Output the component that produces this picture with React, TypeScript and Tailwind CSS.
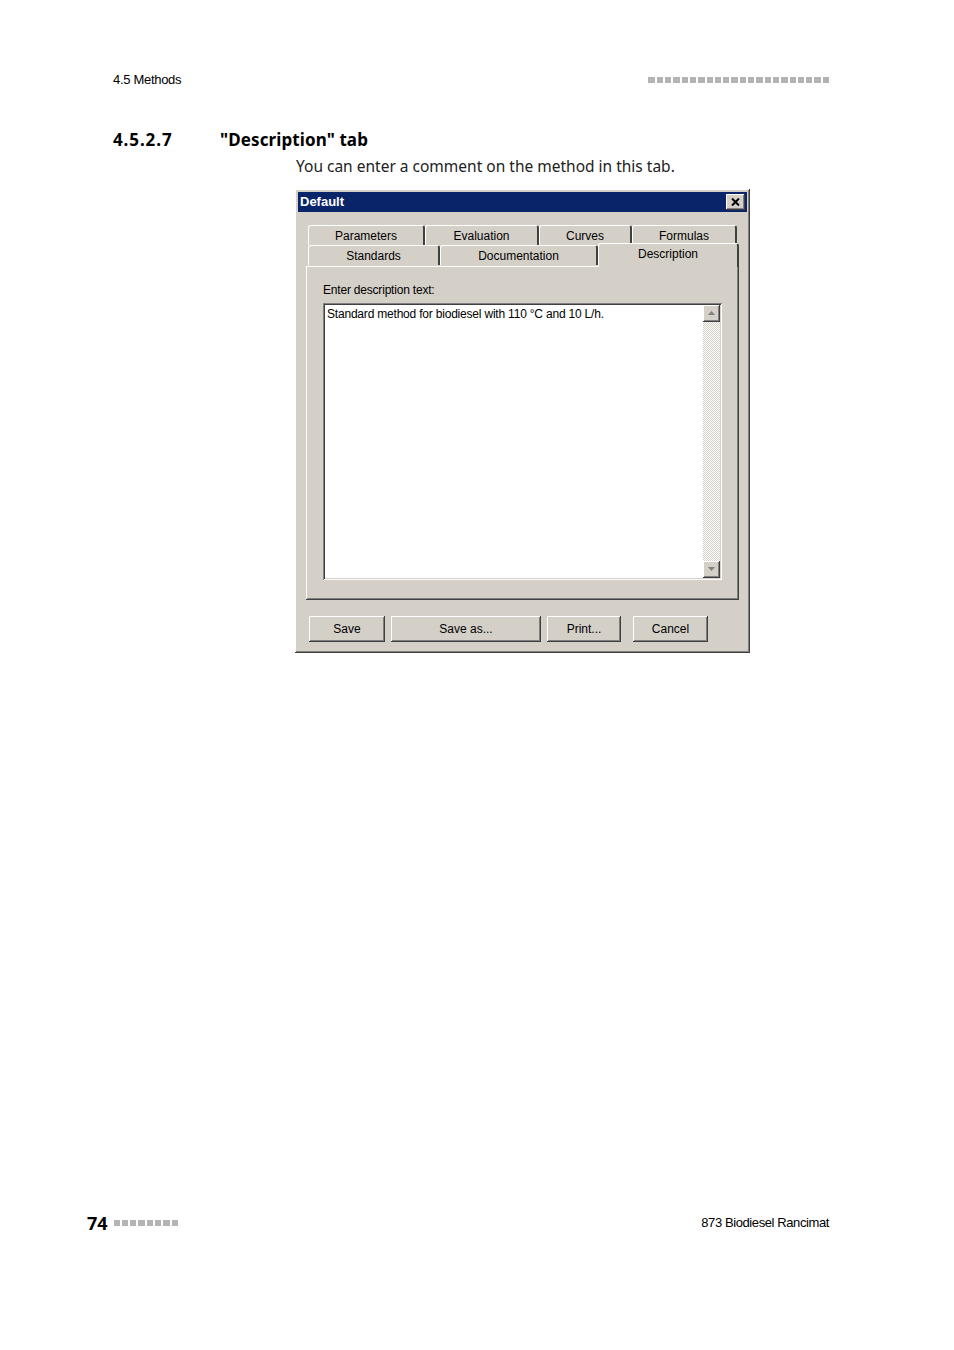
import React from "react";

const raised =
  "shadow-[inset_-1px_-1px_#404040,inset_1px_1px_#ffffff,inset_-2px_-2px_#808080,inset_2px_2px_#d4d0c8]";
const sunken =
  "shadow-[inset_1px_1px_#808080,inset_-1px_-1px_#ffffff,inset_2px_2px_#404040,inset_-2px_-2px_#d4d0c8]";

function Dots({ count }: { count: number }) {
  return (
    <div className="flex gap-[2px]">
      {Array.from({ length: count }).map((_, i) => (
        <span key={i} className="block w-[6.3px] h-[6px] bg-[#b3b3b3]" />
      ))}
    </div>
  );
}

function Tab({ label, width, selected = false }: { label: string; width: number; selected?: boolean }) {
  return (
    <div
      style={{ width }}
      className={`flex items-center justify-center rounded-t-[3px] border-t border-l border-white border-r-2 border-r-[#404040] ${
        selected ? "h-[24px] -mt-[2px] pb-[3px] relative z-10" : "h-[20px] pt-[1px]"
      } bg-[#d4d0c8]`}
    >
      {label}
    </div>
  );
}

function WinButton({ label, width }: { label: string; width: number }) {
  return (
    <button
      type="button"
      style={{ width }}
      className={`h-[26px] bg-[#d4d0c8] ${raised} text-[12px] text-black`}
    >
      {label}
    </button>
  );
}

function ArrowBtn({ up }: { up: boolean }) {
  return (
    <div className={`w-[17px] h-[17px] bg-[#d4d0c8] ${raised} flex items-center justify-center`}>
      <svg width="7" height="4" viewBox="0 0 7 4">
        {up ? <path d="M3.5 0 L7 4 L0 4 Z" fill="#808080" /> : <path d="M0 0 L7 0 L3.5 4 Z" fill="#808080" />}
      </svg>
    </div>
  );
}

export default function App() {
  return (
    <div className="w-[954px] h-[1350px] bg-white flex flex-col font-['Liberation_Sans',sans-serif] text-black">
      {/* running header */}
      <div className="flex items-center justify-between pl-[113px] pr-[125px] pt-[70px]">
        <span className="text-[13px] tracking-[-0.3px] font-['Liberation_Sans_Narrow','Liberation_Sans',sans-serif]">4.5 Methods</span>
        <Dots count={22} />
      </div>

      {/* section heading */}
      <div className="flex items-center pl-[113px] mt-[40px] font-['Noto_Sans',sans-serif] font-bold text-[17px] leading-[20px]">
        <span className="w-[107px] tracking-[0.9px]">4.5.2.7</span>
        <span className="tracking-[0.1px]">"Description" tab</span>
      </div>
      <p className="pl-[296px] mt-[6px] text-[15.5px] leading-[20px] text-[#222] font-['Noto_Sans',sans-serif]">
        You can enter a comment on the method in this tab.
      </p>

      {/* dialog */}
      <div className={`ml-[295px] mt-[13px] w-[455px] h-[464px] bg-[#d4d0c8] ${raised} p-[3px] text-[12px]`}>
        <div className="h-[20px] bg-[#0a246a] flex items-center justify-between pl-[2px] pr-[2px]">
          <span className="text-white font-bold text-[13px] leading-none">Default</span>
          <div className={`w-[19px] h-[16px] bg-[#d4d0c8] ${raised} flex items-center justify-center`}>
            <svg width="9" height="8" viewBox="0 0 9 8">
              <path d="M1 0.5 L8 7.5 M8 0.5 L1 7.5" stroke="#000" strokeWidth="2" />
            </svg>
          </div>
        </div>

        <div className="pl-[8px] pt-[13px]">
          {/* tabs */}
          <div className="pl-[2px]">
            <div className="flex">
              <Tab label="Parameters" width={117} />
              <Tab label="Evaluation" width={114} />
              <Tab label="Curves" width={93} />
              <Tab label="Formulas" width={105} />
            </div>
            <div className="flex items-start">
              <Tab label="Standards" width={132} />
              <Tab label="Documentation" width={158} />
              <Tab label="Description" width={141} selected />
            </div>
          </div>
          {/* panel */}
          <div className={`-mt-[1px] w-[433px] h-[334px] ${raised} px-[17px] pt-[16px]`}>
            <div className="leading-[16px] mb-[5px] tracking-[-0.2px]">Enter description text:</div>
            <div className={`w-[399px] h-[277px] bg-white ${sunken} p-[2px] flex`}>
              <div className="flex-1 px-[2px] pt-[1px] leading-[16px] tracking-[-0.2px]">
                Standard method for biodiesel with 110 °C and 10 L/h.
              </div>
              <div className="w-[17px] flex flex-col">
                <ArrowBtn up />
                <div className="flex-1 bg-[repeating-conic-gradient(#d4d0c8_0_25%,#ffffff_0_50%)] bg-[length:2px_2px]" />
                <ArrowBtn up={false} />
              </div>
            </div>
          </div>
        </div>

        {/* buttons */}
        <div className="flex pl-[11px] mt-[16px]">
          <WinButton label="Save" width={76} />
          <div className="w-[6px]" />
          <WinButton label="Save as..." width={150} />
          <div className="w-[6px]" />
          <WinButton label="Print..." width={74} />
          <div className="w-[12px]" />
          <WinButton label="Cancel" width={75} />
        </div>
      </div>

      {/* footer */}
      <div className="mt-auto pb-[116px] flex items-center justify-between pl-[87px] pr-[125px]">
        <div className="flex items-center gap-[6px]">
          <span className="font-['Noto_Sans',sans-serif] font-bold text-[18px] leading-[22px]">74</span>
          <Dots count={8} />
        </div>
        <span className="text-[13px] tracking-[-0.4px] font-['Liberation_Sans_Narrow','Liberation_Sans',sans-serif]">873 Biodiesel Rancimat</span>
      </div>
    </div>
  );
}
